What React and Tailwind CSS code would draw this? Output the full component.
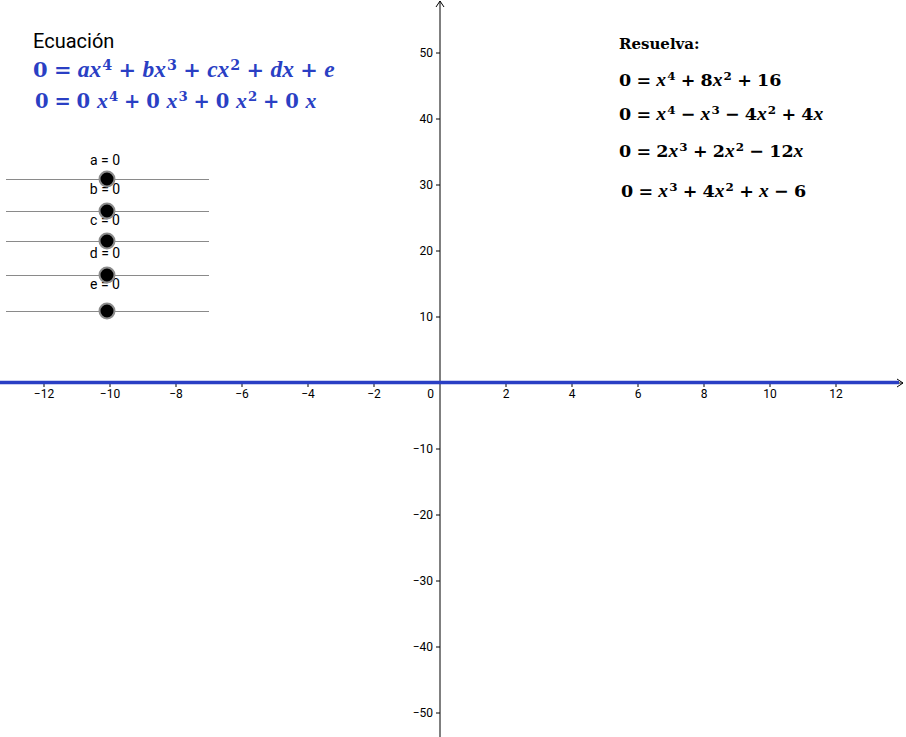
const BLUE = "#2a3fc4";

const xTicks = [-12, -10, -8, -6, -4, -2, 2, 4, 6, 8, 10, 12];
const yTicks = [50, 40, 30, 20, 10, -10, -20, -30, -40, -50];

const OX = 440;
const OY = 383;
const SX = 33;
const SY = 6.6;

const sans = { fontFamily: "Roboto, 'Liberation Sans', sans-serif" };
const mathFont = { fontFamily: "'DejaVu Serif', 'Liberation Serif', serif" };

function num(v) {
  return v < 0 ? "\u2212" + Math.abs(v) : String(v);
}

// little helpers for typeset math
function V({ children }) {
  return (
    <span className="italic text-[1.12em]" style={{ fontFamily: "'Liberation Serif', serif" }}>
      {children}
    </span>
  );
}
function Sup({ children }) {
  return <span className="relative -top-[0.5em] text-[0.68em] ml-[1px]">{children}</span>;
}
function Op({ children }) {
  return <span className="mx-[0.3em]">{children}</span>;
}

function Graph() {
  return (
    <svg className="absolute inset-0" width="906" height="737" viewBox="0 0 906 737">
      {/* x axis */}
      <line x1="0" y1={OY} x2="903" y2={OY} stroke="#000" strokeWidth="1" />
      <path d="M897 379 L903 383 L897 387" fill="none" stroke="#000" strokeWidth="1" />
      {/* y axis */}
      <line x1={OX} y1="1" x2={OX} y2="737" stroke="#000" strokeWidth="1" />
      <path d="M436 7 L440 1 L444 7" fill="none" stroke="#000" strokeWidth="1" />

      {xTicks.map((t) => (
        <g key={"x" + t}>
          <line x1={OX + t * SX} y1={OY} x2={OX + t * SX} y2={OY + 4} stroke="#000" />
          <text x={OX + t * SX} y={OY + 15} textAnchor="middle" fontSize="12" style={sans} fill="#000">
            {num(t)}
          </text>
        </g>
      ))}
      <text x="434" y={OY + 15} textAnchor="end" fontSize="12" style={sans}>
        0
      </text>

      {yTicks.map((t) => (
        <g key={"y" + t}>
          <line x1={OX - 4} y1={OY - t * SY} x2={OX} y2={OY - t * SY} stroke="#000" />
          <text x="433" y={OY - t * SY + 4} textAnchor="end" fontSize="12" style={sans} fill="#000">
            {num(t)}
          </text>
        </g>
      ))}

      {/* the polynomial, currently y = 0 */}
      <line x1="0" y1={OY - 0.5} x2="899" y2={OY - 0.5} stroke={BLUE} strokeWidth="3.5" />
    </svg>
  );
}

function Slider({ name, className, lineClass }) {
  return (
    <div className={"flex flex-col w-[203px] " + className}>
      <div className="text-[14px] leading-[16px] text-black text-center pr-[5px]" style={sans}>
        {name} = 0
      </div>
      <div className={"relative h-px bg-[#8a8a8a] " + lineClass}>
        <div className="absolute left-[101px] top-0 w-[17px] h-[17px] rounded-full bg-black border-[2.5px] border-[#8c8c8c] -translate-x-1/2 -translate-y-1/2" />
      </div>
    </div>
  );
}

export default function App() {
  return (
    <div className="relative w-[906px] h-[737px] bg-white overflow-hidden">
      <Graph />

      {/* left: general equation and its sliders */}
      <div className="absolute left-0 top-[29px] flex flex-col items-start">
        <div className="ml-[33px] text-[20px] leading-[24px] text-black" style={sans}>
          Ecuación
        </div>
        <div
          className="ml-[33px] mt-[2px] text-[21px] leading-[28px] font-bold whitespace-nowrap text-[#2a3fc4]"
          style={mathFont}
        >
          0<Op>=</Op>
          <V>ax</V>
          <Sup>4</Sup>
          <Op>+</Op>
          <V>bx</V>
          <Sup>3</Sup>
          <Op>+</Op>
          <V>cx</V>
          <Sup>2</Sup>
          <Op>+</Op>
          <V>dx</V>
          <Op>+</Op>
          <V>e</V>
        </div>
        <div
          className="ml-[35px] mt-[1px] text-[19.5px] leading-[28px] font-bold whitespace-nowrap text-[#2a3fc4]"
          style={mathFont}
        >
          0<Op>=</Op>0 <V>x</V>
          <Sup>4</Sup>
          <Op>+</Op>0 <V>x</V>
          <Sup>3</Sup>
          <Op>+</Op>0 <V>x</V>
          <Sup>2</Sup>
          <Op>+</Op>0 <V>x</V>
        </div>

        <div className="ml-[6px] flex flex-col">
          <Slider name="a" className="mt-[34px]" lineClass="mt-[11px]" />
          <Slider name="b" className="mt-[1px]" lineClass="mt-[14px]" />
          <Slider name="c" className="mt-0" lineClass="mt-[13px]" />
          <Slider name="d" className="mt-[3px]" lineClass="mt-[14px]" />
          <Slider name="e" className="mt-0" lineClass="mt-[19px]" />
        </div>
      </div>

      {/* right: exercises */}
      <div className="absolute left-[619px] top-[37px] flex flex-col items-start text-black" style={mathFont}>
        <div className="text-[15px] font-bold leading-none">Resuelva:</div>
        <div className="mt-[18px] text-[17.5px] font-bold leading-none whitespace-nowrap">
          0<Op>=</Op>
          <V>x</V>
          <Sup>4</Sup>
          <Op>+</Op>8<V>x</V>
          <Sup>2</Sup>
          <Op>+</Op>16
        </div>
        <div className="mt-[14px] text-[17.5px] font-bold leading-none whitespace-nowrap">
          0<Op>=</Op>
          <V>x</V>
          <Sup>4</Sup>
          <Op>−</Op>
          <V>x</V>
          <Sup>3</Sup>
          <Op>−</Op>4<V>x</V>
          <Sup>2</Sup>
          <Op>+</Op>4<V>x</V>
        </div>
        <div className="mt-[18px] text-[17.5px] font-bold leading-none whitespace-nowrap">
          0<Op>=</Op>2<V>x</V>
          <Sup>3</Sup>
          <Op>+</Op>2<V>x</V>
          <Sup>2</Sup>
          <Op>−</Op>12<V>x</V>
        </div>
        <div className="mt-[20px] ml-[2px] text-[17.5px] font-bold leading-none whitespace-nowrap">
          0<Op>=</Op>
          <V>x</V>
          <Sup>3</Sup>
          <Op>+</Op>4<V>x</V>
          <Sup>2</Sup>
          <Op>+</Op>
          <V>x</V>
          <Op>−</Op>6
        </div>
      </div>
    </div>
  );
}
